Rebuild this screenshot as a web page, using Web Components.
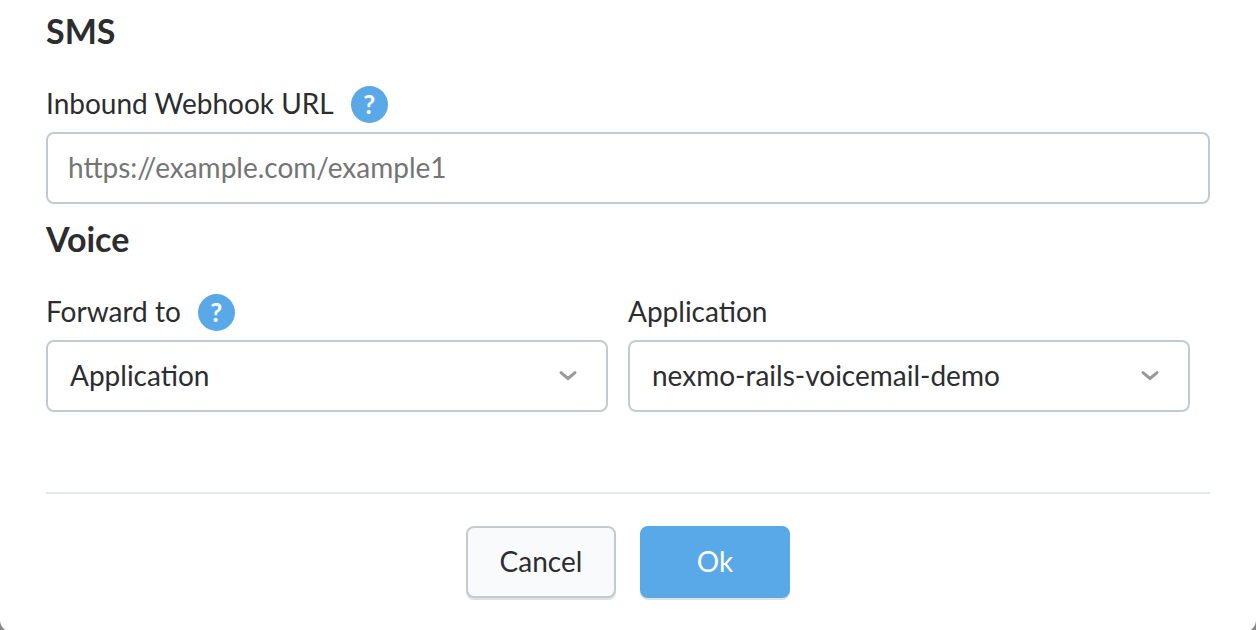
<!DOCTYPE html>
<html lang="en">
<head>
<meta charset="utf-8">
<meta name="viewport" content="width=device-width, initial-scale=1">
<title>Number settings</title>
<style>
  html { overflow: hidden; background: #878787; }
  body {
    margin: 0;
    font-family: Lato, "Open Sans", sans-serif;
    font-size: 28px;
    line-height: 36px;
    color: #2c2d2f;
    --line: #c2cbd4;
    --rule: #e4e9ed;
    --blue: #59a8e8;
  }
</style>
</head>
<body>
<number-settings></number-settings>

<script>
  const attach = (host, html) => {
    const template = document.createElement('template');
    template.innerHTML = html;
    const root = host.attachShadow({ mode: 'open' });
    root.append(template.content.cloneNode(true));
    return root;
  };

  const fieldStyle = `
    :host { display: block; min-width: 0; }
    .head { display: flex; align-items: center; gap: 17px; height: 36px; margin-bottom: 10px; }
    label { padding-bottom: 2px; }
    .control { display: block; position: relative; }
    input, select {
      appearance: none; display: block; box-sizing: border-box; width: 100%; height: 72px;
      margin: 0; border: 2px solid var(--line); border-radius: 8px;
      background: #fff; color: inherit; font: inherit; outline-color: var(--blue);
    }
    input { padding: 0 20px 2px; }
    input::placeholder { color: #757575; opacity: 1; }
    select { padding: 0 60px 2px 22px; }
    svg { position: absolute; right: 28px; top: 24px; width: 24px; height: 24px; pointer-events: none; }
  `;

  customElements.define('help-tip', class extends HTMLElement {
    constructor() {
      super();
      attach(this, `
        <style>
          :host { display: inline-flex; }
          button {
            width: 37px; height: 37px; padding: 0; border: 0; border-radius: 50%;
            background: var(--blue); color: #fff; font: inherit; font-size: 26px;
            font-weight: 700; line-height: 36px; text-align: center; cursor: help;
          }
        </style>
        <button type="button">?</button>`);
    }
  });

  customElements.define('section-title', class extends HTMLElement {
    constructor() {
      super();
      attach(this, `
        <style>
          :host { display: block; }
          h2 { margin: 0 0 32px; font-size: 34px; line-height: 46px; font-weight: 700; }
        </style>
        <h2><slot></slot></h2>`);
    }
  });

  customElements.define('text-field', class extends HTMLElement {
    constructor() {
      super();
      const root = attach(this, `
        <style>${fieldStyle}</style>
        <div class="head"><label for="control"></label><slot></slot></div>
        <input id="control" type="url">`);
      root.querySelector('label').textContent = this.getAttribute('label');
      root.querySelector('input').placeholder = this.getAttribute('placeholder');
    }
  });

  customElements.define('select-field', class extends HTMLElement {
    constructor() {
      super();
      const root = attach(this, `
        <style>${fieldStyle}</style>
        <div class="head"><label for="control"></label><slot></slot></div>
        <div class="control">
          <select id="control"></select>
          <svg viewBox="0 0 24 24" fill="none" stroke="#999" stroke-width="3" stroke-linecap="round" stroke-linejoin="miter" aria-hidden="true"><path d="M5 8.700l7 5.800 7-5.800"/></svg>
        </div>`);
      root.querySelector('label').textContent = this.getAttribute('label');
      root.querySelector('select').add(new Option(this.getAttribute('value')));
    }
  });

  customElements.define('action-button', class extends HTMLElement {
    constructor() {
      super();
      attach(this, `
        <style>
          :host { display: block; }
          button {
            box-sizing: border-box; width: 150px; height: 72px; padding: 0 0 2px;
            border: 2px solid var(--line); border-radius: 8px; background: #f9fafc;
            box-shadow: 0 2px 0 #e0e0e0; color: inherit; font: inherit; cursor: pointer;
          }
          :host([primary]) button { border-color: var(--blue); background: var(--blue); color: #fff; }
        </style>
        <button type="button"><slot></slot></button>`);
    }
  });

  customElements.define('number-settings', class extends HTMLElement {
    constructor() {
      super();
      attach(this, `
        <style>
          :host { display: block; padding: 8px 46px 34px; background: #fff; border-radius: 0 0 12px 12px; }
          form { margin: 0; }
          text-field { margin-bottom: 12px; }
          .pair { display: grid; grid-template-columns: 1fr 1fr; gap: 20px; margin: 0 20px 80px 0; }
          footer { display: flex; justify-content: center; gap: 24px; padding-top: 32px; border-top: 2px solid var(--rule); }
        </style>
        <form>
          <section-title>SMS</section-title>
          <text-field label="Inbound Webhook URL" placeholder="https://example.com/example1"><help-tip></help-tip></text-field>
          <section-title>Voice</section-title>
          <div class="pair">
            <select-field label="Forward to" value="Application"><help-tip></help-tip></select-field>
            <select-field label="Application" value="nexmo-rails-voicemail-demo"></select-field>
          </div>
          <footer>
            <action-button>Cancel</action-button>
            <action-button primary>Ok</action-button>
          </footer>
        </form>`);
    }
  });
</script>
</body>
</html>
